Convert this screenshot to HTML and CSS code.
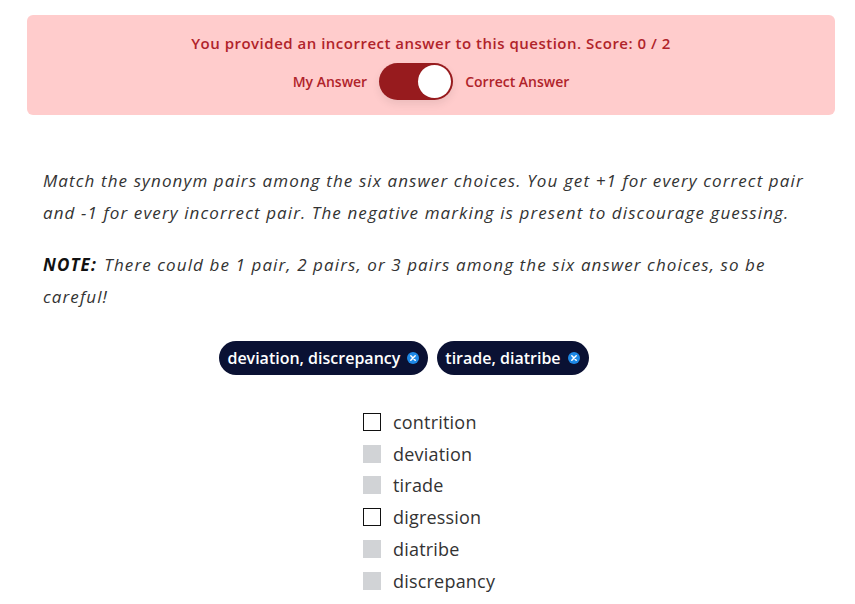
FILE: index.html
```html
<!doctype html>
<html lang="en">
  <head>
    <meta charset="UTF-8" />
    <title>Synonym Pairs</title>
    <link rel="stylesheet" href="styles.css">
  </head>
  <body>
    <div class="page">
      <div class="result-banner">
        <div class="result-title">You provided an incorrect answer to this question. Score: 0 / 2</div>
        <div class="toggle-row">
          <span>My Answer</span>
          <span class="switch"><span class="knob"></span></span>
          <span>Correct Answer</span>
        </div>
      </div>

      <div class="question">
        <p>Match the synonym pairs among the six answer choices. You get +1 for every correct pair and -1 for every incorrect pair. The negative marking is present to discourage guessing.</p>
        <p><b>NOTE:</b> There could be 1 pair, 2 pairs, or 3 pairs among the six answer choices, so be careful!</p>
      </div>

      <div class="pairs">
        <span class="pair">deviation, discrepancy <span class="pair-close"><svg viewBox="0 0 12 12" width="12" height="12"><circle cx="6" cy="6" r="6" fill="#1e88e5"/><path d="M3.8 3.8l4.4 4.4M8.2 3.8l-4.4 4.4" stroke="#fff" stroke-width="1.5" stroke-linecap="round"/></svg></span></span>
        <span class="pair">tirade, diatribe <span class="pair-close"><svg viewBox="0 0 12 12" width="12" height="12"><circle cx="6" cy="6" r="6" fill="#1e88e5"/><path d="M3.8 3.8l4.4 4.4M8.2 3.8l-4.4 4.4" stroke="#fff" stroke-width="1.5" stroke-linecap="round"/></svg></span></span>
      </div>

      <ul class="choices">
        <li><span class="box"></span>contrition</li>
        <li><span class="box disabled"></span>deviation</li>
        <li><span class="box disabled"></span>tirade</li>
        <li><span class="box"></span>digression</li>
        <li><span class="box disabled"></span>diatribe</li>
        <li><span class="box disabled"></span>discrepancy</li>
      </ul>
    </div>
  </body>
</html>
```

FILE: styles.css
```css
body {
  margin: 0;
  font-family: 'Open Sans', 'Noto Sans', sans-serif;
  background-color: #fff;
  color: #333;
}

.page {
  padding: 15px 20px 0 27px;
}

.result-banner {
  background-color: #ffcccc;
  border-radius: 6px;
  padding: 18px 0 15px;
  text-align: center;
  color: #b0232a;
  font-weight: 600;
}

.result-title {
  font-size: 15px;
  letter-spacing: 0.5px;
}

.toggle-row {
  display: flex;
  justify-content: center;
  align-items: center;
  gap: 12px;
  margin-top: 10px;
  font-size: 14px;
}

.switch {
  display: flex;
  justify-content: flex-end;
  width: 74px;
  height: 37px;
  box-sizing: border-box;
  padding: 2px;
  border-radius: 19px;
  background-color: #971b1e;
  box-shadow: 0 4px 8px rgba(0, 0, 0, 0.08);
}

.knob {
  width: 33px;
  height: 33px;
  border-radius: 50%;
  background-color: #fff;
}

.question {
  padding: 50px 16px 0;
  font-size: 17px;
  font-style: italic;
  line-height: 32px;
  letter-spacing: 1.1px;
}

.question p {
  margin: 0 0 20px;
}

.question b {
  color: #111;
  margin-right: 2px;
}

.pairs {
  display: flex;
  justify-content: center;
  gap: 9px;
  margin-top: 28px;
  padding-right: 54px;
}

.pair {
  display: flex;
  align-items: center;
  gap: 7px;
  height: 34px;
  padding: 0 9px 0 8px;
  border-radius: 17px;
  background-color: #0a1133;
  color: #fff;
  font-size: 16px;
  font-weight: 600;
}

.pair-close {
  display: flex;
}

.choices {
  list-style: none;
  margin: 31px 0 0;
  padding: 0 0 0 336px;
  font-size: 18px;
  letter-spacing: 0.2px;
}

.choices li {
  display: flex;
  align-items: center;
  gap: 12px;
  height: 31.8px;
}

.box {
  width: 18px;
  height: 18px;
  box-sizing: border-box;
  border: 1.5px solid #111;
  background-color: #fff;
}

.box.disabled {
  border: none;
  background-color: #d1d3d6;
}
```
